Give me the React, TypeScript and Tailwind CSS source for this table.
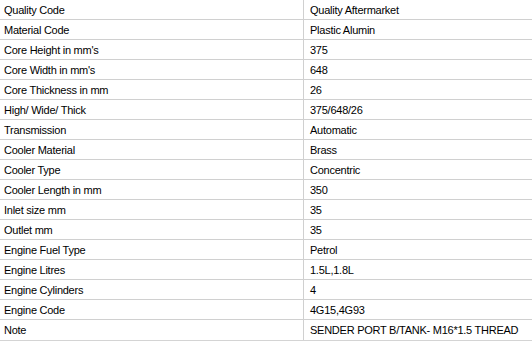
const rows: [string, string][] = [
  ['Quality Code', 'Quality Aftermarket'],
  ['Material Code', 'Plastic Alumin'],
  ["Core Height in mm's", '375'],
  ["Core Width in mm's", '648'],
  ['Core Thickness in mm', '26'],
  ['High/ Wide/ Thick', '375/648/26'],
  ['Transmission', 'Automatic'],
  ['Cooler Material', 'Brass'],
  ['Cooler Type', 'Concentric'],
  ['Cooler Length in mm', '350'],
  ['Inlet size mm', '35'],
  ['Outlet mm', '35'],
  ['Engine Fuel Type', 'Petrol'],
  ['Engine Litres', '1.5L,1.8L'],
  ['Engine Cylinders', '4'],
  ['Engine Code', '4G15,4G93'],
  ['Note', 'SENDER PORT B/TANK- M16*1.5 THREAD'],
]

export default function App() {
  return (
    <div className="h-[341px] w-[532px] bg-white font-['Liberation_Sans',sans-serif] text-[11px] tracking-[-0.25px] text-black">
      <div className="grid grid-cols-[303px_1fr] border-b-2 border-[#d4d4d4]">
        {rows.map(([label, value], i) => (
          <div key={label} className="contents">
            <div
              className={`flex h-[20px] items-center whitespace-nowrap pl-1 pt-px ${i < rows.length - 1 ? 'border-b border-[#d0d0d0]' : ''}`}
            >
              {label}
            </div>
            <div
              className={`flex h-[20px] items-center whitespace-nowrap border-l border-[#d0d0d0] pl-[6px] pt-px ${i < rows.length - 1 ? 'border-b' : ''}`}
            >
              {value}
            </div>
          </div>
        ))}
      </div>
    </div>
  )
}
